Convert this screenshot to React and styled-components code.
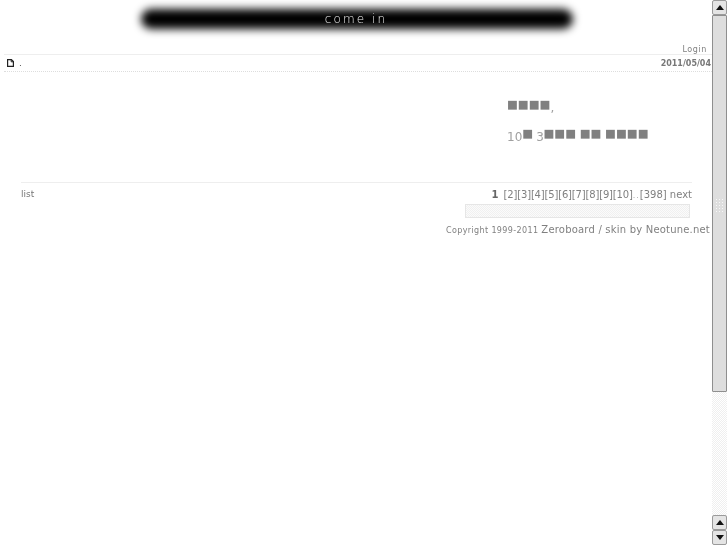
import React from 'react';
import styled, { createGlobalStyle } from 'styled-components';

const Global = createGlobalStyle`
    html, body {
        margin: 0;
        padding: 0;
        height: 100%;
        overflow: hidden;
        background: #fff;
    }
`;

const Page = styled.div`
    display: flex;
    width: 727px;
    height: 545px;
    overflow: hidden;
    font-family: "DejaVu Sans", sans-serif;
    color: #808080;
    will-change: transform;
`;

const Main = styled.main`
    flex: 1;
    min-width: 0;
    display: flex;
    flex-direction: column;
    padding-top: 4px;
`;

const BannerWrap = styled.div`
    display: flex;
    justify-content: center;
    padding-left: 2px;
    height: 30px;
`;

const Banner = styled.div`
    position: relative;
    width: 440px;
    height: 30px;
    display: flex;
    align-items: center;
    justify-content: center;

    &::before {
        content: '';
        position: absolute;
        inset: 5px 4px;
        border-radius: 10px;
        background: #000;
        filter: blur(4.5px);
    }
`;

const BannerText = styled.span`
    position: relative;
    left: -1px;
    font-weight: 200;
    font-size: 12px;
    letter-spacing: 2.1px;
    color: #f4f4f4;
`;

const LoginRow = styled.div`
    display: flex;
    justify-content: flex-end;
    margin-top: 10px;
    padding-right: 5px;
    height: 10px;
    font-size: 8px;
    line-height: 12px;
    letter-spacing: 0.6px;
`;

const PostRow = styled.div`
    display: flex;
    align-items: center;
    justify-content: space-between;
    margin-left: 4px;
    height: 16px;
    padding: 0 1px 0 3px;
    border-top: 1px solid #eeeeee;
    border-bottom: 1px dotted #dddddd;
`;

const PostTitle = styled.div`
    display: flex;
    align-items: center;
    gap: 5px;
    font-size: 9px;
    color: #555;
`;

const PostDate = styled.span`
    font-size: 8px;
    font-weight: bold;
    color: #777;
`;

const Body = styled.div`
    display: flex;
    flex-direction: column;
    gap: 13px;
    margin-top: 28px;
    padding-left: 507px;
    height: 82px;
    font-size: 12px;
    line-height: 16px;
    color: #808080;
    white-space: pre;
`;

const BodyLine = styled.div`
    height: 16px;
`;

const Tofu = styled.span`
    position: relative;
    top: -4px;
    font-size: 11.5px;
`;

const Small = styled.span`
    color: #a0a0a0;
    letter-spacing: ${(props) => (props.$tight ? '-0.6px' : '0')};
`;

const ListArea = styled.div`
    margin: 0 20px 0 21px;
    padding-top: 4px;
    border-top: 1px solid #eeeeee;
    display: flex;
    justify-content: space-between;
    align-items: center;
    height: 15px;
`;

const ListLink = styled.span`
    position: relative;
    top: -1px;
    font-size: 9px;
    color: #777;
`;

const Pager = styled.div`
    font-size: 10px;
    color: #808080;

    b { color: #666; margin-right: 2px; }
    i { font-style: normal; font-size: 8px; letter-spacing: 1px; color: #aaa; }
`;

const PageNums = styled.span`
    letter-spacing: -0.17px;
`;

const SearchBar = styled.div`
    align-self: flex-end;
    margin: 2px 22px 0 0;
    width: 223px;
    height: 12px;
    border: 1px solid #e6e6e6;
    background: repeating-conic-gradient(#f0f0f0 0 25%, #fbfbfb 0 50%) 0 0 / 2px 2px;
`;

const Copyright = styled.div`
    align-self: flex-end;
    margin: 6px 2px 0 0;
    font-size: 8px;
    line-height: 12px;
    letter-spacing: 0.38px;
    color: #808080;

    span { font-size: 10px; letter-spacing: 0.2px; }
`;

const Scroll = styled.aside`
    width: 15px;
    height: 545px;
    display: flex;
    flex-direction: column;
    background: repeating-conic-gradient(#efefef 0 25%, #fff 0 50%) 0 0 / 2px 2px;
`;

const ScrollBtn = styled.div`
    flex: none;
    box-sizing: border-box;
    height: 15px;
    display: flex;
    align-items: center;
    justify-content: center;
    background: #e4e4e4;
    border: 1px solid #9a9a9a;
    border-radius: 2px;
`;

const Thumb = styled.div`
    flex: none;
    box-sizing: border-box;
    height: 377px;
    display: flex;
    align-items: center;
    justify-content: center;
    background: #dedede;
    border: 1px solid #8f8f8f;
    border-radius: 1px;
`;

const Grip = styled.div`
    width: 9px;
    height: 15px;
    margin-top: 3px;
    background: radial-gradient(#f8f8f8 40%, transparent 45%) 0 0 / 3px 3px;
`;

const Gap = styled.div`
    flex: 1;
`;

const Arrow = ({ down }) => (
  <svg width="8" height="5" viewBox="0 0 8 5">
    <path d={down ? 'M0 0h8L4 5z' : 'M4 0L8 5H0z'} fill="#111" />
  </svg>
);

const DocIcon = () => (
  <svg width="7" height="8" viewBox="0 0 7 8">
    <path d="M.6.6h3.8l2 2v4.8H.6z" fill="#fff" stroke="#222" strokeWidth="1.2" />
    <path d="M4.2.6v2.2h2.2" fill="none" stroke="#222" />
  </svg>
);

function App() {
  return (
    <Page>
      <Global />
      <Main>
        <BannerWrap>
          <Banner>
            <BannerText>come in</BannerText>
          </Banner>
        </BannerWrap>
        <LoginRow>Login</LoginRow>
        <PostRow>
          <PostTitle>
            <DocIcon />
            .
          </PostTitle>
          <PostDate>2011/05/04</PostDate>
        </PostRow>
        <Body>
          <BodyLine><Tofu>■■■■</Tofu><Small>,</Small></BodyLine>
          <BodyLine><Small>10</Small><Tofu>■</Tofu><Small $tight> 3</Small><Tofu>■■■ ■■ ■■■■</Tofu></BodyLine>
        </Body>
        <ListArea>
          <ListLink>list</ListLink>
          <Pager><b>1</b> <PageNums>[2][3][4][5][6][7][8][9][10]</PageNums><i>..</i>[398] next</Pager>
        </ListArea>
        <SearchBar />
        <Copyright>Copyright 1999-2011 <span>Zeroboard / skin by Neotune.net</span></Copyright>
      </Main>
      <Scroll>
        <ScrollBtn><Arrow /></ScrollBtn>
        <Thumb><Grip /></Thumb>
        <Gap />
        <ScrollBtn><Arrow /></ScrollBtn>
        <ScrollBtn><Arrow down /></ScrollBtn>
      </Scroll>
    </Page>
  );
}

export default App;
